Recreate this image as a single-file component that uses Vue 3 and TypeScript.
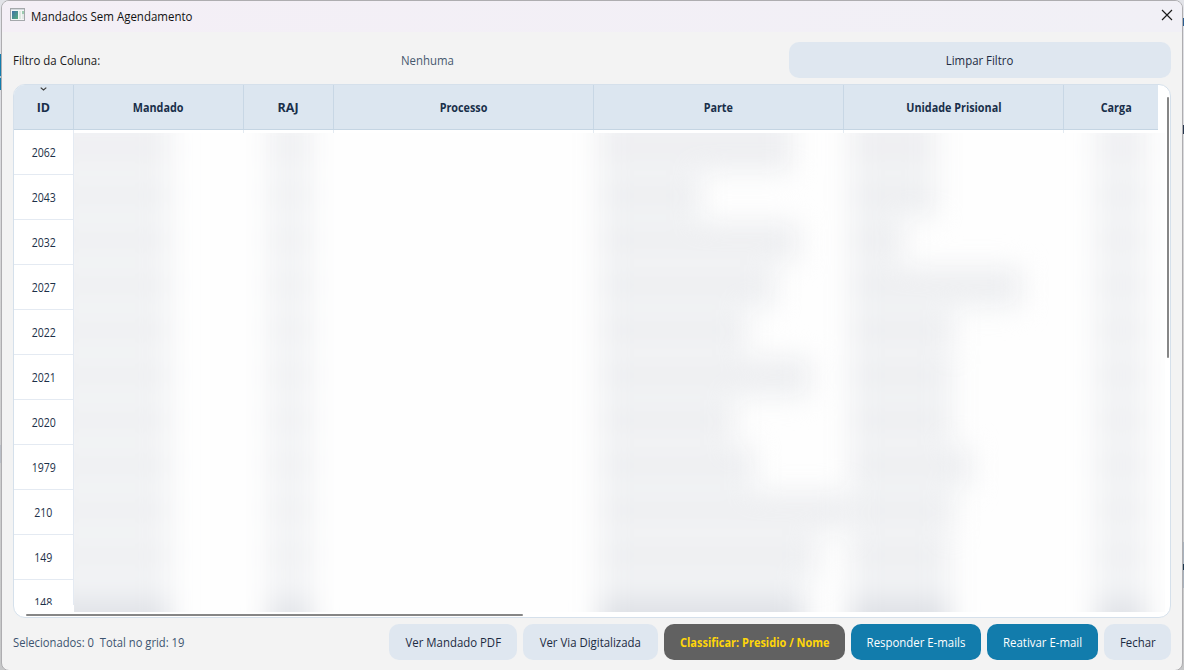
<script setup lang="ts">
interface Column {
  key: string
  label: string
}

interface Row {
  id: string
  parte: number
  unidade: number
}

interface Action {
  label: string
  kind: string
}

const columns: Column[] = [
  { key: 'id', label: 'ID' },
  { key: 'mandado', label: 'Mandado' },
  { key: 'raj', label: 'RAJ' },
  { key: 'processo', label: 'Processo' },
  { key: 'parte', label: 'Parte' },
  { key: 'unidade', label: 'Unidade Prisional' },
  { key: 'carga', label: 'Carga' },
]

// parte / unidade: widths of the hidden values, in pixels
const rows: Row[] = [
  { id: '2062', parte: 194, unidade: 86 },
  { id: '2043', parte: 102, unidade: 86 },
  { id: '2032', parte: 200, unidade: 54 },
  { id: '2027', parte: 176, unidade: 172 },
  { id: '2022', parte: 148, unidade: 104 },
  { id: '2021', parte: 212, unidade: 102 },
  { id: '2020', parte: 136, unidade: 102 },
  { id: '1979', parte: 156, unidade: 122 },
  { id: '210', parte: 248, unidade: 104 },
  { id: '149', parte: 218, unidade: 100 },
  { id: '148', parte: 206, unidade: 100 },
]

const actions: Action[] = [
  { label: 'Ver Mandado PDF', kind: 'pdf' },
  { label: 'Ver Via Digitalizada', kind: 'scan' },
  { label: 'Classificar: Presidio / Nome', kind: 'classify' },
  { label: 'Responder E-mails', kind: 'reply' },
  { label: 'Reativar E-mail', kind: 'reactivate' },
  { label: 'Fechar', kind: 'dismiss' },
]
</script>

<template>
  <div class="desktop">
    <i class="speck left-blue"></i>
    <i class="speck left-band"></i>
    <i class="speck right-blue"></i>
    <i class="speck right-dark"></i>
    <i class="speck right-band"></i>
    <i class="speck right-low"></i>
    <div class="window">
      <header class="titlebar">
        <svg class="app-icon" width="15" height="13" viewBox="0 0 15 13">
          <defs>
            <linearGradient id="pane" x1="0" y1="0" x2="1" y2="1">
              <stop offset="0" stop-color="#3f71a6" />
              <stop offset="1" stop-color="#58ad7c" />
            </linearGradient>
          </defs>
          <rect x="0.5" y="0.5" width="14" height="12" fill="#f5f6f6" stroke="#a4a8ab" />
          <rect x="1" y="1" width="13" height="1" fill="#d3d8dc" />
          <rect x="2" y="3" width="6" height="8" fill="url(#pane)" />
          <rect x="9" y="3" width="2" height="8" fill="#dce8df" />
          <rect x="12" y="3" width="2" height="3" fill="#9ccbb0" />
          <rect x="12" y="6" width="2" height="5" fill="#e3e9e7" />
        </svg>
        <span class="title">Mandados Sem Agendamento</span>
        <svg class="close" width="12" height="12" viewBox="0 0 12 12">
          <path d="M1 1L11 11M11 1L1 11" stroke="#1b1b1b" stroke-width="1.15" fill="none" />
        </svg>
      </header>

      <section class="filter">
        <span class="filter-label">Filtro da Coluna:</span>
        <span class="filter-value">Nenhuma</span>
        <button class="btn clear"><span>Limpar Filtro</span></button>
      </section>

      <main class="table">
        <div class="head">
          <div v-for="c in columns" :key="c.key" class="th" :class="c.key">
            <svg v-if="c.key === 'id'" class="sort" width="7" height="4" viewBox="0 0 7 4">
              <path d="M0.7 0.6L3.5 3L6.3 0.6" stroke="#3c3c3c" stroke-width="1.2" fill="none" />
            </svg>
            <span>{{ c.label }}</span>
          </div>
        </div>
        <div class="body">
          <div class="ids">
            <div v-for="r in rows" :key="r.id" class="id-cell"><span>{{ r.id }}</span></div>
          </div>
          <div class="values">
            <div class="ticks"><i></i><i></i><i></i><i></i><i></i></div>
            <div class="veil">
              <div class="smudges">
                <div v-for="r in rows" :key="r.id" class="smudge-row">
                  <div class="cell"><i class="s-mandado"></i></div>
                  <div class="cell"><i class="s-raj"></i></div>
                  <div class="cell"></div>
                  <div class="cell"><i class="s-parte" :style="{ width: r.parte + 'px' }"></i></div>
                  <div class="cell"><i class="s-unidade" :style="{ width: r.unidade + 'px' }"></i></div>
                  <div class="cell"><i class="s-carga"></i></div>
                </div>
              </div>
            </div>
          </div>
        </div>
        <i class="bar-v"></i>
        <i class="bar-h"></i>
      </main>

      <footer class="footer">
        <span class="status">Selecionados: 0&nbsp; Total no grid: 19</span>
        <div class="actions">
          <button v-for="a in actions" :key="a.kind" class="btn" :class="a.kind">
            <span>{{ a.label }}</span>
          </button>
        </div>
      </footer>
    </div>
  </div>
</template>

<style>
html,
body {
  margin: 0;
  overflow: hidden;
}
</style>

<style scoped>
* {
  box-sizing: border-box;
}

.desktop {
  position: relative;
  width: 1184px;
  height: 670px;
  overflow: hidden;
  background: linear-gradient(#e2e3e8, #d2d2d3 45%, #c6c7c8);
  font-family: "Open Sans", "Noto Sans", sans-serif;
  font-size: 12px;
  color: #1c3048;
  white-space: nowrap;
}

.speck {
  position: absolute;
}

.left-blue {
  left: 0;
  top: 54px;
  width: 2px;
  height: 36px;
  background: linear-gradient(#127cac 22px, #a9c8d6 22px 24px, #127cac 24px);
}

.left-band {
  left: 0;
  top: 445px;
  width: 2px;
  height: 18px;
  background: #b9bec6;
}

.right-blue {
  left: 1182px;
  top: 18px;
  width: 2px;
  height: 8px;
  background: #2b5d91;
}

.right-dark {
  left: 1183px;
  top: 125px;
  width: 1px;
  height: 9px;
  background: #26364f;
}

.right-band {
  left: 1183px;
  top: 542px;
  width: 1px;
  height: 46px;
  background: #a9b2bd;
}

.right-low {
  left: 1183px;
  top: 564px;
  width: 1px;
  height: 6px;
  background: #1c3850;
}

.window {
  position: relative;
  width: 1182px;
  height: 671px;
  margin-left: 1px;
  border: 1px solid #aeadb0;
  border-radius: 8px;
  background: #f3f3f3;
  display: flex;
  flex-direction: column;
  overflow: hidden;
}

.titlebar {
  height: 31px;
  flex: none;
  display: flex;
  align-items: center;
  padding: 0 9px 3px 8px;
  background: linear-gradient(90deg, #f4eff6, #f1f0f6);
  color: #111;
}

.app-icon {
  display: block;
  margin-top: -1px;
}

.title {
  margin: 2px 0 0 6px;
  transform: scaleX(0.957);
  transform-origin: left;
}

.close {
  margin-left: auto;
}

.filter {
  flex: none;
  height: 36px;
  margin: 10px 11px 0;
  display: grid;
  grid-template-columns: 388px 388px 382px;
  align-items: center;
}

.filter-label {
  color: #1a1a1a;
  transform: scaleX(0.955);
  transform-origin: left;
}

.filter-value {
  color: #46586e;
  transform: scaleX(0.95);
  transform-origin: left;
}

.btn {
  height: 36px;
  padding: 0;
  border: 0;
  border-radius: 10px;
  background: #dfe7f0;
  color: #1c2b42;
  font-family: inherit;
  font-size: 12px;
  font-weight: 500;
  white-space: nowrap;
}

.btn span {
  display: inline-block;
  transform: scaleX(0.95);
}

.table {
  position: relative;
  flex: none;
  width: 1158px;
  height: 534px;
  margin: 6px 0 0 11px;
  border: 1px solid #d5e0eb;
  border-radius: 12px;
  background: #fff;
  overflow: hidden;
}

.head {
  display: grid;
  grid-template-columns: 60px 170px 90px 260px 250px 220px 104px;
  width: 1144px;
  height: 45px;
  overflow: hidden;
  background: #dce6f0;
  border-bottom: 1px solid #c5d5e3;
}

.th {
  position: relative;
  display: flex;
  align-items: center;
  justify-content: center;
  padding-top: 1px;
  border-right: 1px solid #c8d7e5;
  font-weight: 700;
  color: #192f4a;
}

.th span {
  transform: scaleX(0.9);
}

.th.id span,
.th.raj span {
  transform: scaleX(1.04);
}

.th:last-child {
  border-right: 0;
}

.sort {
  position: absolute;
  top: 2px;
  left: 26px;
}

.body {
  display: grid;
  grid-template-columns: 60px 1091px;
  height: 482px;
}

.ids {
  height: 475px;
  overflow: hidden;
}

.id-cell {
  height: 45px;
  display: flex;
  align-items: center;
  justify-content: center;
  border-right: 1px solid #e4eaf2;
  border-bottom: 1px solid #e4eaf2;
}

.id-cell span {
  transform: scaleX(0.88);
}

.ticks {
  display: grid;
  grid-template-columns: 170px 90px 260px 250px 220px;
  height: 3px;
}

.ticks i {
  border-right: 1px solid #e3eaf1;
}

.veil {
  height: 479px;
  overflow: hidden;
  background: #fefefe;
}

.smudges {
  margin-top: -3px;
  filter: blur(13px);
}

.smudge-row {
  display: grid;
  grid-template-columns: 170px 90px 260px 250px 220px 101px;
  height: 45px;
}

.cell i {
  display: block;
  height: 45px;
  background: linear-gradient(#f5f7f8, #ebecef 25% 60%, #f5f7f8);
}

.smudge-row:first-child i {
  box-shadow: 0 -24px #eeeff2;
}

.smudge-row:last-child i {
  height: 70px;
  background: linear-gradient(#f4f5f7, #d9dce2 50%);
}

.cell .s-mandado {
  width: 126px;
  margin-left: -30px;
  opacity: 0.85;
}

.cell .s-raj {
  width: 44px;
  margin-left: 24px;
  opacity: 0.8;
}

.cell .s-parte {
  margin-left: 5px;
  opacity: 0.9;
}

.cell .s-unidade {
  margin-left: 6px;
  opacity: 0.9;
}

.cell .s-carga {
  width: 50px;
  margin-left: 32px;
  opacity: 0.85;
}

.bar-v {
  position: absolute;
  right: 1px;
  top: 12px;
  width: 2px;
  height: 261px;
  border-radius: 1px;
  background: #868686;
}

.bar-h {
  position: absolute;
  left: 12px;
  bottom: 1px;
  width: 497px;
  height: 2px;
  border-radius: 1px;
  background: #868686;
}

.footer {
  flex: none;
  height: 36px;
  margin: 6px 11px 0;
  display: flex;
  align-items: center;
  justify-content: space-between;
}

.status {
  color: #3c5470;
  transform: scaleX(0.936);
  transform-origin: left;
}

.actions {
  display: flex;
  gap: 6px;
}

.pdf {
  width: 128px;
}

.scan {
  width: 135px;
}

.classify {
  width: 181px;
  background: #616161;
  color: #ffd60a;
  font-weight: 700;
}

.classify span {
  transform: scaleX(0.914);
}

.reply {
  width: 130px;
  background: #127cac;
  color: #fff;
}

.reactivate {
  width: 111px;
  background: #127cac;
  color: #fff;
}

.dismiss {
  width: 67px;
}
</style>
